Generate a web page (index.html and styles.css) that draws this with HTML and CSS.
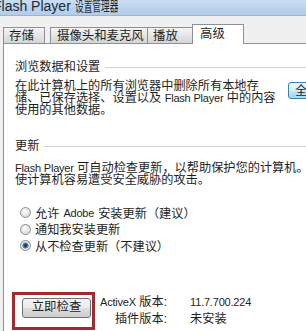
FILE: index.html
```html
<!DOCTYPE html>
<html lang="zh-CN">
<head>
    <meta charset="UTF-8">
    <meta name="viewport" content="width=device-width, initial-scale=1.0">
    <title>Flash Player 设置管理器</title>
    <link rel="stylesheet" href="styles.css">
</head>
<body>

<div class="window">
    <div class="titlebar">
        <span class="title">Flash Player <span class="title-cn">设置管理器</span></span>
    </div>

    <div class="tabs">
        <div class="tab tab-storage">存储</div>
        <div class="tab tab-camera">摄像头和麦克风</div>
        <div class="tab tab-play">播放</div>
        <div class="tab tab-active">高级</div>
    </div>

    <div class="panel">
        <!-- 浏览数据 -->
        <div class="group">
            <div class="group-title">浏览数据和设置</div>
            <div class="group-body">
                <p class="desc">在此计算机上的所有浏览器中删除所有本地存<br>储、已保存选择、设置以及 <span class="en">Flash Player</span> 中的内容<br>使用的其他数据。</p>
                <button class="btn-clear">全部删除...</button>
            </div>
        </div>

        <!-- 更新 -->
        <div class="group group-update">
            <div class="group-title">更新</div>
            <p class="desc desc-update"><span class="en">Flash Player</span> 可自动检查更新，以帮助保护您的计算机。如果选择不检查更新，<br>使计算机容易遭受安全威胁的攻击。</p>

            <div class="options">
                <label class="option"><span class="radio"></span>允许 <span class="en">Adobe</span> 安装更新（建议）</label>
                <label class="option"><span class="radio"></span>通知我安装更新</label>
                <label class="option"><span class="radio checked"></span>从不检查更新（不建议）</label>
            </div>
        </div>

        <div class="footer-row">
            <div class="highlight">
                <button class="btn-check">立即检查</button>
            </div>
            <div class="versions">
                <span class="label"><span class="en">ActiveX</span> 版本:</span>
                <span class="value en">11.7.700.224</span>
                <span class="label">插件版本:</span>
                <span class="value">未安装</span>
            </div>
        </div>
    </div>
</div>

</body>
</html>
```

FILE: styles.css
```css
body {
    margin: 0;
    background-color: #f0f0f0;
    font-family: "Liberation Sans", "Noto Sans CJK SC", sans-serif;
    font-size: 12.2px;
    color: #1e1e1e;
}
.window {
    width: 306px;
    height: 331px;
    overflow: hidden;
    background-color: #f0f0f0;
}
.en {
    font-size: 11px;
    letter-spacing: -0.2px;
}

/* title bar */
.titlebar {
    height: 15px;
    border-bottom: 1px solid #9db4cc;
    background: linear-gradient(#c9def3, #b9d2ec 60%, #b2cce9);
    overflow: hidden;
}
.title {
    display: block;
    margin: -3px 0 0 -7px;
    font-size: 14px;
    line-height: 18px;
    color: #1d2935;
    white-space: nowrap;
}
.title-cn {
    display: inline-block;
    transform: scaleX(0.62);
    transform-origin: left;
}

/* tabs */
.tabs {
    display: flex;
    align-items: flex-end;
    height: 20px;
    padding: 8px 0 0 3px;
    margin-bottom: -1px;
    position: relative;
    z-index: 1;
}
.tab {
    box-sizing: border-box;
    height: 16px;
    margin-bottom: 1px;
    padding: 1px 0 0 6px;
    border: 1px solid #8d9196;
    border-bottom: none;
    background: linear-gradient(#f4f4f4, #e6e6e6 50%, #d4d4d4);
    font-size: 12.4px;
    line-height: 15px;
    white-space: nowrap;
    overflow: hidden;
}
.tab-storage {
    width: 42px;
    padding-left: 5px;
    margin-right: 5px;
}
.tab-camera {
    width: 98px;
}
.tab-play {
    width: 46px;
    margin-left: -1px;
    padding-left: 5px;
}
.tab-active {
    width: 52px;
    height: 20px;
    margin-bottom: 0;
    margin-left: -1px;
    padding: 2px 0 0 7px;
    background: #fff;
    line-height: 14px;
}

/* panel */
.panel {
    box-sizing: border-box;
    height: 288px;
    margin-left: 3px;
    padding: 17px 0 0 11px;
    background-color: #fff;
    border-top: 1px solid #8d9196;
    border-left: 1px solid #8d9196;
}
.group-title {
    display: flex;
    align-items: center;
    gap: 5px;
    line-height: 12px;
    white-space: nowrap;
}
.group-title::after {
    content: "";
    flex: 1;
    border-top: 1px solid #cdd3d8;
}
.group-body {
    display: flex;
    align-items: flex-start;
    margin-top: 8px;
}
.desc {
    flex-shrink: 0;
    width: 273px;
    margin: 0;
    line-height: 11.8px;
    white-space: nowrap;
}
.btn-clear {
    flex-shrink: 0;
    width: 100px;
    height: 17px;
    margin-top: 1px;
    padding: 0 0 0 6px;
    text-align: left;
    border: 1px solid #3c7fb1;
    border-radius: 3px;
    background: linear-gradient(#eaf6fd, #d9f0fc 50%, #bee6fd 50%, #a7d9f5);
    font-family: inherit;
    font-size: 12.2px;
    line-height: 14px;
    color: #1e1e1e;
}
.group-update {
    margin-top: 24px;
}
.desc-update {
    margin-top: 10px;
    line-height: 12px;
}

/* radios */
.options {
    margin-top: 18px;
}
.option {
    display: flex;
    align-items: center;
    gap: 4px;
    height: 16.5px;
    padding-left: 5px;
    white-space: nowrap;
}
.radio {
    box-sizing: border-box;
    width: 11px;
    height: 11px;
    border-radius: 50%;
    border: 1px solid #8e8f8f;
    background: radial-gradient(circle at 45% 40%, #ffffff, #e9e9e9 45%, #cdcdcd);
}
.radio.checked {
    background: radial-gradient(circle, #142c48 0, #2b5585 1.6px, #6f93bb 2.8px, #eeeeee 3.4px, #d2d2d2 5px);
}

/* bottom row */
.footer-row {
    display: flex;
    align-items: flex-start;
    margin-top: 38px;
}
.highlight {
    margin-left: -3px;
    padding: 3px 1px 9px 7px;
    border: 3px solid #a42a2e;
}
.btn-check {
    display: block;
    box-sizing: border-box;
    width: 69px;
    height: 20px;
    padding: 0;
    border: 1px solid #707070;
    border-radius: 3px;
    background: linear-gradient(#f3f3f3, #ebebeb 50%, #dddddd 50%, #cfcfcf);
    font-family: inherit;
    font-size: 12.4px;
    line-height: 17px;
    color: #1e1e1e;
}
.versions {
    display: grid;
    grid-template-columns: auto auto;
    column-gap: 23px;
    margin: 2px 0 0 5px;
    line-height: 17px;
    white-space: nowrap;
}
.label {
    text-align: right;
}
```
